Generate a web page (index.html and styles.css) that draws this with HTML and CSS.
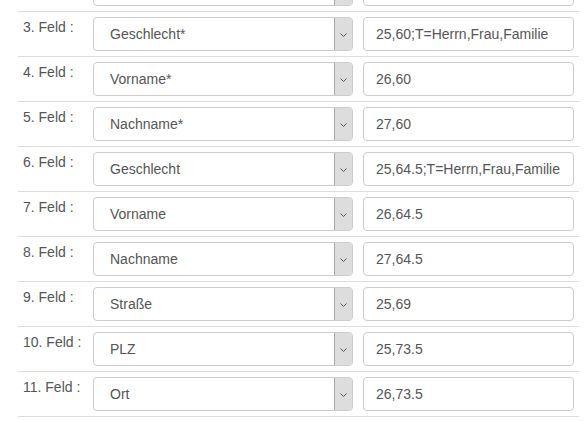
FILE: index.html
```html
<!DOCTYPE html>
<html lang="de">
<head>
<meta charset="utf-8">
<title>Felder</title>
<link rel="stylesheet" href="styles.css">
</head>
<body>
<div class="page">
  <div class="fields">
    <div class="row"><div class="lbl"></div><div class="cell"><div class="sel"><span class="sel-text"></span><span class="arrow"><svg width="7" height="4" viewBox="0 0 7 4"><polyline points="0.5,0.5 3.5,3.5 6.5,0.5" fill="none" stroke="#555" stroke-width="1"/></svg></span></div></div><div class="cell"><input class="inp" type="text" value=""></div></div>
    <div class="row"><div class="lbl">3. Feld :</div><div class="cell"><div class="sel"><span class="sel-text">Geschlecht*</span><span class="arrow"><svg width="7" height="4" viewBox="0 0 7 4"><polyline points="0.5,0.5 3.5,3.5 6.5,0.5" fill="none" stroke="#555" stroke-width="1"/></svg></span></div></div><div class="cell"><input class="inp" type="text" value="25,60;T=Herrn,Frau,Familie"></div></div>
    <div class="row"><div class="lbl">4. Feld :</div><div class="cell"><div class="sel"><span class="sel-text">Vorname*</span><span class="arrow"><svg width="7" height="4" viewBox="0 0 7 4"><polyline points="0.5,0.5 3.5,3.5 6.5,0.5" fill="none" stroke="#555" stroke-width="1"/></svg></span></div></div><div class="cell"><input class="inp" type="text" value="26,60"></div></div>
    <div class="row"><div class="lbl">5. Feld :</div><div class="cell"><div class="sel"><span class="sel-text">Nachname*</span><span class="arrow"><svg width="7" height="4" viewBox="0 0 7 4"><polyline points="0.5,0.5 3.5,3.5 6.5,0.5" fill="none" stroke="#555" stroke-width="1"/></svg></span></div></div><div class="cell"><input class="inp" type="text" value="27,60"></div></div>
    <div class="row"><div class="lbl">6. Feld :</div><div class="cell"><div class="sel"><span class="sel-text">Geschlecht</span><span class="arrow"><svg width="7" height="4" viewBox="0 0 7 4"><polyline points="0.5,0.5 3.5,3.5 6.5,0.5" fill="none" stroke="#555" stroke-width="1"/></svg></span></div></div><div class="cell"><input class="inp" type="text" value="25,64.5;T=Herrn,Frau,Familie"></div></div>
    <div class="row"><div class="lbl">7. Feld :</div><div class="cell"><div class="sel"><span class="sel-text">Vorname</span><span class="arrow"><svg width="7" height="4" viewBox="0 0 7 4"><polyline points="0.5,0.5 3.5,3.5 6.5,0.5" fill="none" stroke="#555" stroke-width="1"/></svg></span></div></div><div class="cell"><input class="inp" type="text" value="26,64.5"></div></div>
    <div class="row"><div class="lbl">8. Feld :</div><div class="cell"><div class="sel"><span class="sel-text">Nachname</span><span class="arrow"><svg width="7" height="4" viewBox="0 0 7 4"><polyline points="0.5,0.5 3.5,3.5 6.5,0.5" fill="none" stroke="#555" stroke-width="1"/></svg></span></div></div><div class="cell"><input class="inp" type="text" value="27,64.5"></div></div>
    <div class="row"><div class="lbl">9. Feld :</div><div class="cell"><div class="sel"><span class="sel-text">Straße</span><span class="arrow"><svg width="7" height="4" viewBox="0 0 7 4"><polyline points="0.5,0.5 3.5,3.5 6.5,0.5" fill="none" stroke="#555" stroke-width="1"/></svg></span></div></div><div class="cell"><input class="inp" type="text" value="25,69"></div></div>
    <div class="row"><div class="lbl">10. Feld :</div><div class="cell"><div class="sel"><span class="sel-text">PLZ</span><span class="arrow"><svg width="7" height="4" viewBox="0 0 7 4"><polyline points="0.5,0.5 3.5,3.5 6.5,0.5" fill="none" stroke="#555" stroke-width="1"/></svg></span></div></div><div class="cell"><input class="inp" type="text" value="25,73.5"></div></div>
    <div class="row"><div class="lbl">11. Feld :</div><div class="cell"><div class="sel"><span class="sel-text">Ort</span><span class="arrow"><svg width="7" height="4" viewBox="0 0 7 4"><polyline points="0.5,0.5 3.5,3.5 6.5,0.5" fill="none" stroke="#555" stroke-width="1"/></svg></span></div></div><div class="cell"><input class="inp" type="text" value="26,73.5"></div></div>
  </div>
</div>
</body>
</html>
```
FILE: styles.css
```css
html, body {
  margin: 0;
  padding: 0;
  background: #fff;
}
body {
  font-family: "Liberation Sans", Arial, Helvetica, sans-serif;
  font-size: 14px;
  line-height: 20px;
  color: #555;
}
.page {
  padding-left: 18px;
  overflow: hidden;
}
.fields {
  width: 561px;
  margin-top: -34px;
  border-bottom: 1px solid #ddd;
}
.row {
  display: grid;
  grid-template-columns: 70px 270px 221px;
  border-top: 1px solid #ddd;
}
.lbl, .cell {
  padding: 5px;
}
.lbl {
  min-height: 20px;
  color: #555;
  white-space: nowrap;
}
.sel {
  display: flex;
  height: 34px;
  box-sizing: border-box;
  border: 1px solid #ccc;
  border-radius: 4px;
  overflow: hidden;
  background: #fff;
}
.sel-text {
  flex: 1;
  padding: 6px 0 6px 16px;
  color: #555;
}
.arrow {
  width: 17px;
  display: flex;
  align-items: center;
  justify-content: center;
  background: #dddddd;
  border-left: 1px solid #a8a8a8;
}
.arrow svg {
  display: block;
  margin-top: 1px;
}
.inp {
  display: block;
  width: 211px;
  height: 34px;
  box-sizing: border-box;
  margin: 0;
  padding: 6px 12px;
  border: 1px solid #ccc;
  border-radius: 4px;
  font-family: inherit;
  font-size: 14px;
  line-height: 20px;
  color: #555;
  background: #fff;
  outline: none;
}
```
